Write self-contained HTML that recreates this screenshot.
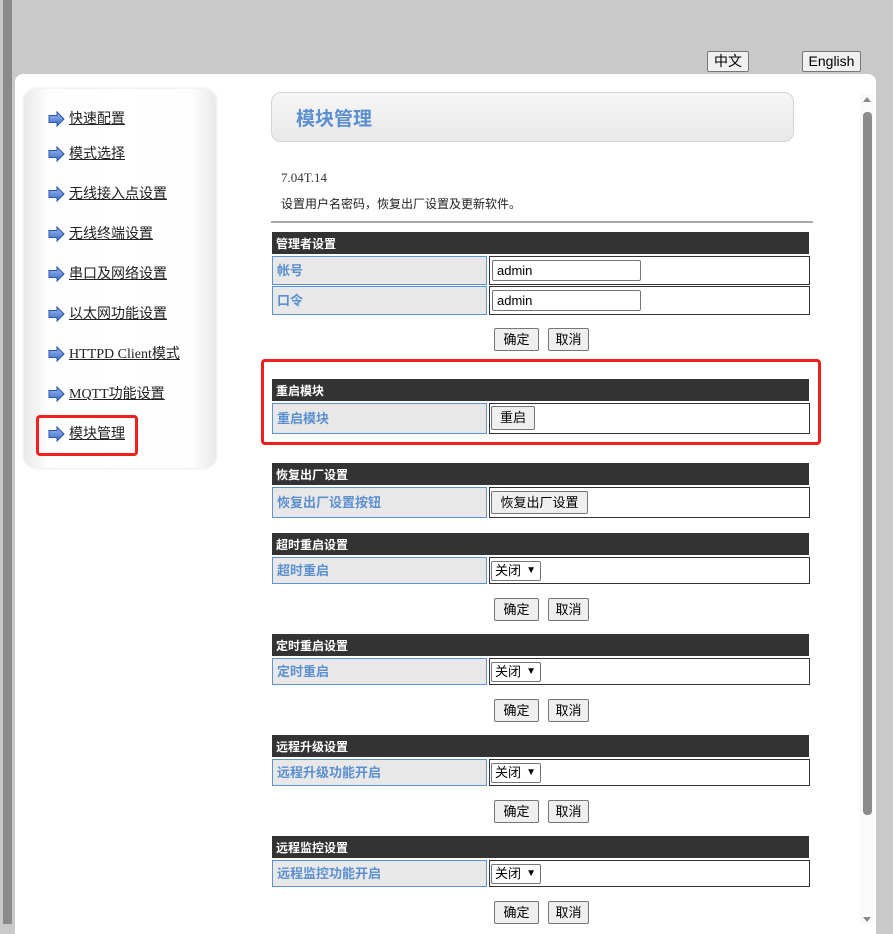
<!DOCTYPE html>
<html><head><meta charset="utf-8"><style>
*{margin:0;padding:0;box-sizing:border-box}
body{width:893px;height:924px;overflow:hidden;background:#c9c9c9;position:relative;font-family:"Liberation Sans","Noto Sans CJK SC",sans-serif;font-size:13px}
.a{position:absolute}
.strip{left:3px;top:0;width:9px;height:924px;background:#8a8a8a}
.panel{left:15px;top:74px;width:861px;height:860px;background:#fff;border-radius:8px 8px 0 0}
.lang{background:#f0f0f0;border:1px solid #767676;border-radius:2px;font-size:14px;color:#000;text-align:center;line-height:18px;height:21px}
.side{left:24px;top:89px;width:192px;height:379px;border-radius:12px;background:linear-gradient(90deg,#e8e8e8,#fdfdfd 12%,#fff 50%,#fdfdfd 88%,#e8e8e8);box-shadow:0 0 3px #ddd}
.item{left:48px;font-size:14px;color:#222;height:20px;line-height:20px;font-family:"Liberation Serif","Noto Sans CJK SC",serif}
.item svg{position:absolute;left:0;top:2px}
.item span{position:absolute;left:21px;white-space:nowrap;text-decoration:underline}
.title{left:271px;top:92px;width:523px;height:50px;border:1px solid #d4d4d4;border-radius:10px;background:linear-gradient(#f6f6f6,#e9e9e9);color:#5b8fd0;font-weight:bold;font-size:19px;line-height:54px;padding-left:24px}
.hd{left:272px;width:537px;height:22px;background:#333;color:#fff;font-weight:bold;font-size:12px;line-height:24px;padding-left:4px}
.lb{left:272px;width:215px;background:#e8e8e8;border:1px solid #5b94d0;color:#5b8fd0;font-weight:bold;font-size:13px;padding-left:4px}
.vl{left:489px;width:321px;border:1px solid #333;background:#fff}
.btn{background:#efefef;border:1px solid #767676;border-radius:2px;font-size:13px;text-align:center;color:#000}
.inp{left:492px;width:149px;height:21px;border:1px solid #767676;border-radius:2px;font-size:13px;padding-left:4px;line-height:19px}
.sel{left:491px;width:50px;height:20px;border:1px solid #767676;border-radius:2px;font-size:13px;padding-left:3px;line-height:18px;background:#fff}
.sel b{position:absolute;right:4px;top:0;font-size:10px}
.red{border:3px solid #f0201c;border-radius:4px}
</style></head><body>
<div class="a strip"></div>
<div class="a lang" style="left:707px;top:51px;width:42px">中文</div>
<div class="a lang" style="left:802px;top:51px;width:59px">English</div>
<div class="a panel"></div>
<div class="a" style="left:860px;top:94px;width:15px;height:830px;background:#fafafa"></div>
<div class="a" style="left:863px;top:97px;width:0;height:0;border-left:4px solid transparent;border-right:4px solid transparent;border-bottom:5px solid #888"></div>
<div class="a" style="left:863px;top:112px;width:9px;height:703px;background:#8c8c8c;border-radius:4px"></div>
<div class="a" style="left:863px;top:917px;width:0;height:0;border-left:4px solid transparent;border-right:4px solid transparent;border-top:5px solid #888"></div>

<div class="a side"></div>
<svg width="0" height="0" style="position:absolute"><defs><linearGradient id="g" x1="0" y1="0" x2="0" y2="1"><stop offset="0" stop-color="#9ab8f0"/><stop offset="1" stop-color="#3d6ec8"/></linearGradient></defs></svg>
<div class="a item" style="top:109px"><svg width="17" height="16"><path d="M1 4.5h8V1l7 7-7 7v-3.5H1z" fill="url(#g)" stroke="#2a55a8" stroke-width="1"/></svg><span style="top:1px">快速配置</span></div>
<div class="a item" style="top:144px"><svg width="17" height="16"><path d="M1 4.5h8V1l7 7-7 7v-3.5H1z" fill="url(#g)" stroke="#2a55a8" stroke-width="1"/></svg><span style="top:1px">模式选择</span></div>
<div class="a item" style="top:184px"><svg width="17" height="16"><path d="M1 4.5h8V1l7 7-7 7v-3.5H1z" fill="url(#g)" stroke="#2a55a8" stroke-width="1"/></svg><span style="top:1px">无线接入点设置</span></div>
<div class="a item" style="top:224px"><svg width="17" height="16"><path d="M1 4.5h8V1l7 7-7 7v-3.5H1z" fill="url(#g)" stroke="#2a55a8" stroke-width="1"/></svg><span style="top:1px">无线终端设置</span></div>
<div class="a item" style="top:264px"><svg width="17" height="16"><path d="M1 4.5h8V1l7 7-7 7v-3.5H1z" fill="url(#g)" stroke="#2a55a8" stroke-width="1"/></svg><span style="top:1px">串口及网络设置</span></div>
<div class="a item" style="top:304px"><svg width="17" height="16"><path d="M1 4.5h8V1l7 7-7 7v-3.5H1z" fill="url(#g)" stroke="#2a55a8" stroke-width="1"/></svg><span style="top:1px">以太网功能设置</span></div>
<div class="a item" style="top:344px"><svg width="17" height="16"><path d="M1 4.5h8V1l7 7-7 7v-3.5H1z" fill="url(#g)" stroke="#2a55a8" stroke-width="1"/></svg><span style="top:1px">HTTPD Client模式</span></div>
<div class="a item" style="top:384px"><svg width="17" height="16"><path d="M1 4.5h8V1l7 7-7 7v-3.5H1z" fill="url(#g)" stroke="#2a55a8" stroke-width="1"/></svg><span style="top:1px">MQTT功能设置</span></div>
<div class="a item" style="top:424px"><svg width="17" height="16"><path d="M1 4.5h8V1l7 7-7 7v-3.5H1z" fill="url(#g)" stroke="#2a55a8" stroke-width="1"/></svg><span style="top:1px">模块管理</span></div>
<div class="a red" style="left:36px;top:415px;width:102px;height:41px"></div>

<div class="a title">模块管理</div>
<div class="a" style="left:281px;top:170px;font-family:'Liberation Serif',serif;font-size:13px;color:#333">7.04T.14</div>
<div class="a" style="left:281px;top:195px;font-size:12px;color:#222">设置用户名密码，恢复出厂设置及更新软件。</div>
<div class="a" style="left:271px;top:221px;width:542px;height:2px;background:#aaa"></div>

<div class="a hd" style="top:232px">管理者设置</div>
<div class="a lb" style="top:256px;height:29px;line-height:27px">帐号</div>
<div class="a vl" style="top:256px;height:29px"></div>
<div class="a inp" style="top:260px">admin</div>
<div class="a lb" style="top:286px;height:29px;line-height:27px">口令</div>
<div class="a vl" style="top:286px;height:29px"></div>
<div class="a inp" style="top:290px">admin</div>
<div class="a btn" style="left:494px;top:328px;width:45px;height:23px;line-height:21px">确定</div>
<div class="a btn" style="left:548px;top:328px;width:41px;height:23px;line-height:21px">取消</div>

<div class="a red" style="left:261px;top:359px;width:560px;height:86px"></div>
<div class="a hd" style="top:379px">重启模块</div>
<div class="a lb" style="top:403px;height:31px;line-height:29px">重启模块</div>
<div class="a vl" style="top:403px;height:31px"></div>
<div class="a btn" style="left:491px;top:406px;width:44px;height:24px;line-height:22px">重启</div>

<div class="a hd" style="top:463px">恢复出厂设置</div>
<div class="a lb" style="top:487px;height:31px;line-height:29px">恢复出厂设置按钮</div>
<div class="a vl" style="top:487px;height:31px"></div>
<div class="a btn" style="left:491px;top:491px;width:97px;height:23px;line-height:21px">恢复出厂设置</div>

<div class="a hd" style="top:533px">超时重启设置</div>
<div class="a lb" style="top:557px;height:27px;line-height:25px">超时重启</div>
<div class="a vl" style="top:557px;height:27px"></div>
<div class="a sel" style="top:561px">关闭<b>▼</b></div>
<div class="a btn" style="left:494px;top:598px;width:45px;height:23px;line-height:21px">确定</div>
<div class="a btn" style="left:548px;top:598px;width:41px;height:23px;line-height:21px">取消</div>

<div class="a hd" style="top:634px">定时重启设置</div>
<div class="a lb" style="top:658px;height:27px;line-height:25px">定时重启</div>
<div class="a vl" style="top:658px;height:27px"></div>
<div class="a sel" style="top:662px">关闭<b>▼</b></div>
<div class="a btn" style="left:494px;top:699px;width:45px;height:23px;line-height:21px">确定</div>
<div class="a btn" style="left:548px;top:699px;width:41px;height:23px;line-height:21px">取消</div>

<div class="a hd" style="top:735px">远程升级设置</div>
<div class="a lb" style="top:759px;height:27px;line-height:25px">远程升级功能开启</div>
<div class="a vl" style="top:759px;height:27px"></div>
<div class="a sel" style="top:763px">关闭<b>▼</b></div>
<div class="a btn" style="left:494px;top:800px;width:45px;height:23px;line-height:21px">确定</div>
<div class="a btn" style="left:548px;top:800px;width:41px;height:23px;line-height:21px">取消</div>

<div class="a hd" style="top:836px">远程监控设置</div>
<div class="a lb" style="top:860px;height:27px;line-height:25px">远程监控功能开启</div>
<div class="a vl" style="top:860px;height:27px"></div>
<div class="a sel" style="top:864px">关闭<b>▼</b></div>
<div class="a btn" style="left:494px;top:901px;width:45px;height:23px;line-height:21px">确定</div>
<div class="a btn" style="left:548px;top:901px;width:41px;height:23px;line-height:21px">取消</div>
</body></html>
